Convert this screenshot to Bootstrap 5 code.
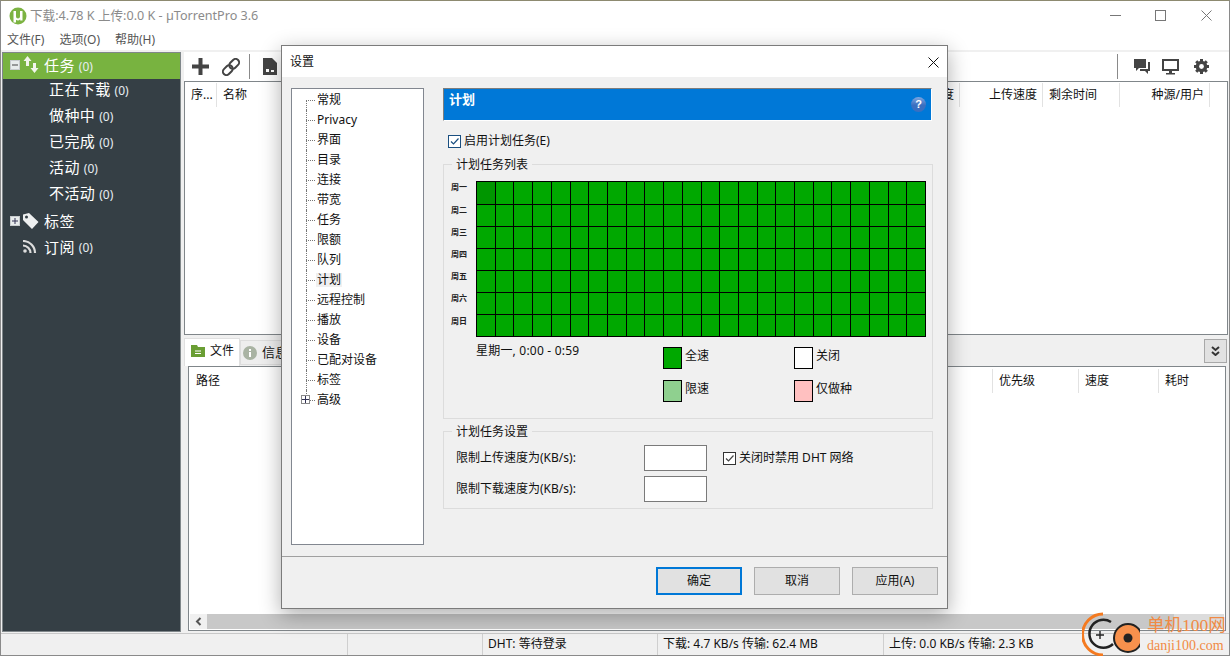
<!DOCTYPE html>
<html lang="zh-CN">
<head>
  <meta charset="UTF-8">
  <meta name="viewport" content="width=device-width, initial-scale=1.0">
  <link rel="stylesheet" href="https://cdn.jsdelivr.net/npm/bootstrap@5.3.0/dist/css/bootstrap.min.css">
  <script src="https://cdn.jsdelivr.net/npm/bootstrap@5.3.0/dist/js/bootstrap.bundle.min.js"></script>
  <style>
    html, body { height: 656px; overflow: hidden; }
    body { font-family: "Noto Sans", "Noto Sans CJK SC", sans-serif; font-size: 12px; color: #111; background: #f0f0f0; position: relative; line-height: 1.2; }
    .app { height: 656px; border-left: 1px solid #8a8a8a; border-right: 1px solid #8a8a8a; border-top: 1px solid #8d8a70; border-bottom: 1px solid #8a8a8a; }
    .title-bar { height: 29px; background: #fff; color: #8b8b8b; font-size: 12.600px; padding-left: 8px; flex: none; }
    .win-btns { gap: 34px; padding-right: 17px; }
    .menu-bar { height: 20px; background: #fff; color: #555; padding-left: 6px; gap: 15px; flex: none; }
    .main-area { height: 582px; padding-top: 2px; flex: none; }
    .side { width: 179px; background: #353f45; border: 1px solid #80878a; color: #fff; flex: none; margin-left: 1px; }
    .side-row { height: 26px; font-size: 15px; letter-spacing: .4px; padding-left: 46px; padding-bottom: 7px; white-space: nowrap; }
    .side-row small { font-size: 12px; letter-spacing: 0; color: #e6edf2; margin-left: 4px; margin-top: 6px; }
    .side-top { padding-left: 2px; padding-bottom: 3px; }
    .side-top small { margin-top: 4px; }
    .side-top.on { background: #78b340; height: 26px; padding-bottom: 2px; }
    .side-ico { width: 16px; margin-left: 3px; margin-right: 5px; flex: none; }
    .tog { width: 10px; height: 10px; border: 1px solid #c8ccce; background: #e8ecec; flex: none; margin-left: 5px; }
    .right-pane { min-width: 0; padding-left: 3px; }
    .tool-bar { height: 29px; background: #fff; padding-left: 8px; flex: none; }
    .t-sep { width: 1px; height: 25px; background: #8a8a8a; flex: none; }
    .list-box { height: 254px; background: #fff; border: 1px solid #80868a; margin-right: 1px; flex: none; }
    .head-row { height: 24px; margin-top: 1px; flex: none; }
    .file-box .head-row { margin-top: 2px; }
    .hcol { height: 24px; border-right: 1px solid #e2e2e2; padding-left: 6px; white-space: nowrap; flex: none; }
    .hcol.end { text-align: right; padding-right: 5px; padding-left: 0; }
    .tab-row { height: 31px; padding-top: 3px; flex: none; }
    .tab-on { width: 56px; height: 28px; background: #fff; border: 1px solid #e0e0e0; border-bottom: 0; gap: 5px; padding: 0 0 3px 6px; }
    .tab-off { width: 70px; height: 25px; background: #eee; border: 1px solid #ddd; gap: 5px; padding-left: 2px; margin-top: 2px; font-size: 13px; }
    .drop-btn { width: 23px; height: 24px; background: #e1e1e1; border: 1px solid #a8a8a8; margin-left: auto; margin-right: 2px; margin-top: 1px; }
    .file-box { height: 265px; margin-left: 4px; margin-right: 3px; background: #fff; border: 1px solid #80868a; flex: none; }
    .grow-sp { flex: 1 1 auto; }
    .scroll-x { height: 15px; margin: 0 1px 1px; background: #c8c8c8; flex: none; }
    .scroll-btn { width: 17px; background: #f0f0f0; }
    .scroll-end { width: 50px; background: #dcdcdc; }
    .status-bar { height: 22px; border-top: 1px solid #c8c8c8; background: #f0f0f0; margin-top: 1px; flex: none; }
    .st-cell { border-right: 1px solid #cfcfcf; height: 100%; padding-left: 5px; white-space: nowrap; flex: none; }

    .dlg { position: absolute; left: 281px; top: 45px; width: 667px; height: 564px; background: #f0f0f0; border: 1px solid #7b7b7b; box-shadow: 0 6px 20px rgba(0,0,0,.32); }
    .dlg-title { height: 31px; background: #fff; padding: 1px 8px 0; }
    .dlg-body { height: 479px; padding: 11px 15px 0 9px; gap: 19px; }
    .tree { width: 133px; height: 457px; background: #fff; border: 1px solid #828790; padding-top: 1px; flex: none; }
    .tree-row { height: 20px; padding-left: 14px; position: relative; white-space: nowrap; }
    .tree-row::before { content: ""; width: 9px; border-top: 1px dotted #777; flex: none; }
    .tree-row::after { content: ""; position: absolute; left: 14px; top: 0; height: 20px; border-left: 1px dotted #777; }
    .tree-row.first::after { top: 10px; height: 10px; }
    .tree-row.last::after { height: 10px; }
    .tree-row.sel span { background: #f0f0f0; }
    .tree-row span { padding: 0 1px; margin-left: 1px; }
    .plus { position: absolute; left: 9px; top: 5px; width: 9px; height: 9px; background: #fff; border: 1px solid #8a8a8a; z-index: 1; }
    .pane { width: 490px; flex: none; }
    .pane-head { height: 33px; margin-right: 1px; background: #0078d7; border-top: 1px solid #7d7d7d; border-left: 1px solid #7d7d7d; border-right: 1px solid #fff; border-bottom: 1px solid #fff; color: #fff; font-weight: 700; font-size: 13px; padding: 3px 5px; }
    .help-ico { width: 15px; height: 15px; margin-top: 5px; border-radius: 50%; background: linear-gradient(#7ea6e0, #3a6fc0 55%); color: #fff; font-family: "Liberation Sans", sans-serif; font-size: 11px; line-height: 15px; text-align: center; }
    .check-row { gap: 3px; }
    .chk { width: 13px; height: 13px; border: 1px solid #333; background: #fff; flex: none; }
    .chk.blue { border-color: #1a4f80; }
    .enable-row { margin-top: 13px; padding-left: 5px; }
    .grp { border: 1px solid #dcdcdc; position: relative; }
    .grp-title { position: absolute; left: 8px; top: -7px; background: #f0f0f0; padding: 0 4px; line-height: 14px; }
    .grp-a { height: 255px; margin-top: 16px; padding: 16px 0 0 7px; }
    .grp-b { height: 78px; margin-top: 12px; padding: 11px 0 0 12px; }
    .days { width: 25px; flex: none; font-size: 8px; font-weight: 700; color: #222; }
    .days div { height: 22.200px; line-height: 12px; }
    .sched { width: 450px; height: 156px; background: #000; display: grid; grid-template-columns: repeat(24, 1fr); grid-template-rows: repeat(7, 1fr); gap: 1px; padding: 1px; flex: none; }
    .sched i { background: #00a800; display: block; }
    .sched i.cur { background: #009600; }
    .slot-wrap { margin-left: 25px; margin-top: 7px; }
    .slot-txt { width: 187px; height: 14px; line-height: 14px; letter-spacing: .2px; white-space: nowrap; flex: none; }
    .legend-grid { padding-top: 3px; }
    .lg-row { height: 33px; }
    .lg-item { gap: 3px; line-height: 13px; align-items: flex-start; width: 131px; }
    .lg-item span + span { margin-top: 2px; }
    .sw { width: 19px; height: 22px; border: 1px solid #000; flex: none; }
    .speed-inp { width: 63px; height: 26px; background: #fff; border: 1px solid #7a7a7a; flex: none; }
    .dlg-foot { height: 52px; border-top: 1px solid #a0a0a0; padding: 10px 9px 0 0; gap: 12px; justify-content: flex-end; }
    .dlg-btn { width: 86px; height: 28px; background: #e1e1e1; border: 1px solid #adadad; color: #111; font-size: 12px; padding: 0; border-radius: 0; }
    .dlg-btn.main-btn { border: 2px solid #0078d7; }

    .mark-wrap { position: absolute; left: 1082px; top: 612px; width: 148px; height: 44px; gap: 7px; }
    .mark-txt { color: #f08a44; line-height: 1; white-space: nowrap; }
    .mark-a { font-family: "Liberation Serif", "Noto Sans CJK SC", serif; font-size: 17.500px; margin-top: 5px; }
    .mark-b { font-family: "Liberation Serif", serif; font-size: 14px; margin-top: 4px; }
  </style>
</head>
<body>
  <div class="app d-flex flex-column">
    <div class="title-bar d-flex align-items-center">
      <svg width="18" height="18" viewBox="0 0 18 18" class="flex-none" style="margin-right:3px"><circle cx="9" cy="9" r="8.500" fill="#7cb342"/><path d="M4.500 4H7v5.500a2 2 0 0 0 4 0V4h2.500v9.500h-2.300V12.300A3 3 0 0 1 7 12.800V15.500H4.500z" fill="#fff"/></svg>
      <span>下载:4.78 K 上传:0.0 K - µTorrentPro 3.6</span>
      <div class="win-btns d-flex align-items-center ms-auto">
        <svg width="11" height="11" viewBox="0 0 11 11"><path d="M0 5.500h11" stroke="#777"/></svg>
        <svg width="11" height="11" viewBox="0 0 11 11"><rect x=".5" y=".5" width="10" height="10" fill="none" stroke="#777"/></svg>
        <svg width="11" height="11" viewBox="0 0 11 11" style="margin-left:1px"><path d="M.5.500l10 10M10.500.500l-10 10" stroke="#777"/></svg>
      </div>
    </div>
    <div class="menu-bar d-flex align-items-center"><span>文件(F)</span><span>选项(O)</span><span>帮助(H)</span></div>

    <div class="main-area d-flex">
      <div class="side">
        <div class="side-row side-top on d-flex align-items-center">
          <span class="tog d-flex align-items-center justify-content-center"><svg width="6" height="6"><path d="M0 3h6" stroke="#444"/></svg></span>
          <svg class="side-ico" height="18" viewBox="0 0 16 18"><path d="M4.500 0l4 5H6v5H3V5H.5zM11.500 17l-4-5H10V7h3v5h2.500z" fill="#f2f5ec"/></svg>
          任务<small>(0)</small>
        </div>
        <div class="side-row d-flex align-items-center">正在下载<small>(0)</small></div>
        <div class="side-row d-flex align-items-center">做种中<small>(0)</small></div>
        <div class="side-row d-flex align-items-center">已完成<small>(0)</small></div>
        <div class="side-row d-flex align-items-center">活动<small>(0)</small></div>
        <div class="side-row d-flex align-items-center">不活动<small>(0)</small></div>
        <div class="side-row side-top d-flex align-items-center">
          <span class="tog d-flex align-items-center justify-content-center"><svg width="6" height="6"><path d="M0 3h6M3 0v6" stroke="#335"/></svg></span>
          <svg class="side-ico" height="16" viewBox="0 0 16 16"><path d="M0 1.500L6 0l9.500 9L9 16 0 7zM3.500 2.500a1.500 1.500 0 1 0 0 3 1.500 1.500 0 0 0 0-3z" fill="#eef0f0" fill-rule="evenodd"/></svg>
          标签
        </div>
        <div class="side-row side-top d-flex align-items-center" style="padding-left:17px">
          <svg class="side-ico" height="13" viewBox="0 0 13 13" preserveAspectRatio="xMinYMid"><circle cx="2" cy="11" r="1.800" fill="#ddd"/><path d="M0 5.500a7.500 7.500 0 0 1 7.500 7.500M0 1a12 12 0 0 1 12 12" fill="none" stroke="#ddd" stroke-width="2.200"/></svg>
          订阅<small>(0)</small>
        </div>
      </div>

      <div class="right-pane flex-grow-1 d-flex flex-column">
        <div class="tool-bar d-flex align-items-center">
          <svg width="17" height="17" viewBox="0 0 17 17"><path d="M6.500 0h4v6.500H17v4h-6.500V17h-4v-6.500H0v-4h6.500z" fill="#444"/></svg>
          <svg width="18" height="18" viewBox="0 0 18 18" style="margin-left:13px"><g fill="none" stroke="#444" stroke-width="2" transform="rotate(-45 9 9)"><rect x="-1" y="5.500" width="11" height="7" rx="3.500"/><rect x="8" y="5.500" width="11" height="7" rx="3.500"/></g></svg>
          <span class="t-sep" style="margin-left:9px"></span>
          <svg width="14" height="17" viewBox="0 0 14 17" style="margin-left:13px"><path d="M0 0h9l5 5v12H0z" fill="#444"/><path d="M3 11h3v3H3zM8 12h3v2H8z" fill="#fff"/></svg>
          <span class="grow-sp"></span>
          <span class="t-sep"></span>
          <svg width="17" height="17" viewBox="0 0 17 17" class="ms-3"><path d="M0 1h12v9H5l-3 3v-3H0z" fill="#444"/><path d="M14 4h2v9h-2v3l-3-3H6v-2h8z" fill="#444"/></svg>
          <svg width="17" height="17" viewBox="0 0 17 17" style="margin-left:11px"><path d="M0 1h17v12H10v2h3v1.500H4V15h3v-2H0zM2 3v8h13V3z" fill="#444" fill-rule="evenodd"/></svg>
          <svg width="17" height="17" viewBox="0 0 17 17" style="margin-left:14px;margin-right:19px"><path d="M8.500 1v15M1 8.500h15M3.200 3.200l10.600 10.600M13.800 3.200L3.200 13.800" stroke="#444" stroke-width="3"/><circle cx="8.500" cy="8.500" r="4.200" fill="none" stroke="#444" stroke-width="3.200"/><circle cx="8.500" cy="8.500" r="2.400" fill="#fff"/></svg>
        </div>
        <div class="list-box">
          <div class="head-row d-flex align-items-center">
            <div class="hcol d-flex align-items-center" style="width:32px">序...</div>
            <div class="hcol d-flex align-items-center" style="width:662px;border-right-color:#fff">名称</div>
            <div class="hcol d-flex align-items-center justify-content-end end" style="width:81px">度</div>
            <div class="hcol d-flex align-items-center justify-content-end end" style="width:83px">上传速度</div>
            <div class="hcol d-flex align-items-center" style="width:77px">剩余时间</div>
            <div class="hcol d-flex align-items-center justify-content-end end" style="width:90px">种源/用户</div>
          </div>
        </div>
        <div class="tab-row d-flex align-items-start">
          <div class="tab-on d-flex align-items-center">
            <svg width="14" height="12" viewBox="0 0 14 12"><path d="M0 0h6l1 2h7v10H0z" fill="#6a9e34"/><path d="M4 6h6M4 8.500h6" stroke="#fff"/></svg>文件
          </div>
          <div class="tab-off d-flex align-items-center">
            <svg width="14" height="14" viewBox="0 0 14 14"><circle cx="7" cy="7" r="7" fill="#a9b3a3"/><path d="M6 3h2v2H6zM6 6h2v5H6z" fill="#fff"/></svg>信息
          </div>
          <div class="drop-btn d-flex align-items-center justify-content-center">
            <svg width="9" height="10" viewBox="0 0 9 10"><path d="M1 1l3.500 3L8 1M1 6l3.500 3L8 6" fill="none" stroke="#333" stroke-width="2"/></svg>
          </div>
        </div>
        <div class="file-box d-flex flex-column">
          <div class="head-row d-flex align-items-center">
            <div class="hcol d-flex align-items-center" style="width:803px;padding-left:7px;border-right:0">路径</div>
            <div class="hcol d-flex align-items-center" style="width:87px;border-left:1px solid #e2e2e2">优先级</div>
            <div class="hcol d-flex align-items-center" style="width:80px">速度</div>
            <div class="hcol d-flex align-items-center" style="width:58px;border-right:0">耗时</div>
          </div>
          <div class="grow-sp"></div>
          <div class="scroll-x d-flex">
            <div class="scroll-btn d-flex align-items-center justify-content-center">
              <svg width="7" height="9" viewBox="0 0 7 9"><path d="M5.500 1L2 4.500 5.500 8" fill="none" stroke="#555" stroke-width="2"/></svg>
            </div>
            <div class="grow-sp"></div>
            <div class="scroll-end"></div>
          </div>
        </div>
      </div>
    </div>

    <div class="status-bar d-flex align-items-center">
      <div class="st-cell" style="width:347px"></div>
      <div class="st-cell" style="width:135px"></div>
      <div class="st-cell d-flex align-items-center" style="width:175px">DHT: 等待登录</div>
      <div class="st-cell d-flex align-items-center" style="width:226px">下载: 4.7 KB/s 传输: 62.4 MB</div>
      <div class="st-cell d-flex align-items-center border-0">上传: 0.0 KB/s 传输: 2.3 KB</div>
    </div>
  </div>

  <div class="dlg">
    <div class="dlg-title d-flex align-items-center justify-content-between">
      <span>设置</span>
      <svg width="11" height="11" viewBox="0 0 11 11"><path d="M.5.500l10 10M10.500.500l-10 10" stroke="#111"/></svg>
    </div>
    <div class="dlg-body d-flex">
      <div class="tree" id="tree"></div>
      <div class="pane">
        <div class="pane-head d-flex justify-content-between">
          <span>计划</span>
          <span class="help-ico">?</span>
        </div>
        <div class="check-row enable-row d-flex align-items-center">
          <span class="chk blue d-flex"><svg width="11" height="11" viewBox="0 0 11 11"><path d="M2 5.500l2.500 2.500L9.500 2.500" fill="none" stroke="#1a4f80" stroke-width="1.200"/></svg></span>
          启用计划任务(E)
        </div>
        <div class="grp grp-a">
          <span class="grp-title">计划任务列表</span>
          <div class="d-flex">
            <div class="days" id="days"></div>
            <div class="sched" id="sched"></div>
          </div>
          <div class="slot-wrap d-flex">
            <div class="slot-txt">星期一, 0:00 - 0:59</div>
            <div class="legend-grid" id="legend"></div>
          </div>
        </div>
        <div class="grp grp-b">
          <span class="grp-title">计划任务设置</span>
          <div class="d-flex align-items-center" style="height:30px">
            <span style="width:188px">限制上传速度为(KB/s):</span>
            <span class="speed-inp"></span>
            <span class="check-row d-flex align-items-center ms-3">
              <span class="chk d-flex"><svg width="11" height="11" viewBox="0 0 11 11"><path d="M2 5.500l2.500 2.500L9.500 2.500" fill="none" stroke="#444" stroke-width="1.200"/></svg></span>
              关闭时禁用 DHT 网络
            </span>
          </div>
          <div class="d-flex align-items-center" style="height:31px">
            <span style="width:188px">限制下载速度为(KB/s):</span>
            <span class="speed-inp"></span>
          </div>
        </div>
      </div>
    </div>
    <div class="dlg-foot d-flex">
      <button class="btn dlg-btn main-btn" type="button">确定</button>
      <button class="btn dlg-btn" type="button">取消</button>
      <button class="btn dlg-btn" type="button">应用(A)</button>
    </div>
  </div>

  <div class="mark-wrap d-flex">
    <svg width="58" height="44" viewBox="0 0 58 44" class="flex-none">
      <path d="M21 2A20.500 20.500 0 0 0 21 43" fill="none" stroke="#f47a20" stroke-width="3"/>
      <path d="M29 10A14 14 0 1 0 31 32" fill="none" stroke="#222" stroke-width="2.500"/>
      <path d="M14 23h8M18 19v8" stroke="#222" stroke-width="1.400"/>
      <circle cx="46" cy="26" r="14" fill="#f7914d" stroke="#222" stroke-width="2"/>
      <circle cx="46" cy="26" r="4.500" fill="#222"/>
    </svg>
    <div class="d-flex flex-column">
      <span class="mark-txt mark-a">单机100网</span>
      <span class="mark-txt mark-b">danji100.com</span>
    </div>
  </div>

  <script>
    const treeItems = ['常规','Privacy','界面','目录','连接','带宽','任务','限额','队列','计划','远程控制','播放','设备','已配对设备','标签','高级'];
    document.getElementById('tree').innerHTML = treeItems.map((name, i) => {
      let cls = 'tree-row d-flex align-items-center';
      if (i === 0) cls += ' first';
      if (i === treeItems.length - 1) cls += ' last';
      if (name === '计划') cls += ' sel';
      const plus = name === '高级' ? '<i class="plus d-flex align-items-center justify-content-center"><svg width="7" height="7"><path d="M0 3.500h7M3.500 0v7" stroke="#335"/></svg></i>' : '';
      return `<div class="${cls}">${plus}<span>${name}</span></div>`;
    }).join('');

    document.getElementById('days').innerHTML = ['周一','周二','周三','周四','周五','周六','周日'].map(d => `<div>${d}</div>`).join('');

    let cells = '';
    for (let i = 0; i < 168; i++) cells += i === 0 ? '<i class="cur"></i>' : '<i></i>';
    document.getElementById('sched').innerHTML = cells;

    const legend = [[['#00a800','全速'],['#fff','关闭']],[['#8fd08f','限速'],['#ffc0c0','仅做种']]];
    document.getElementById('legend').innerHTML = legend.map(row =>
      '<div class="lg-row d-flex">' + row.map(it =>
        `<div class="lg-item d-flex"><span class="sw" style="background:${it[0]}"></span><span>${it[1]}</span></div>`
      ).join('') + '</div>'
    ).join('');
  </script>
</body>
</html>
